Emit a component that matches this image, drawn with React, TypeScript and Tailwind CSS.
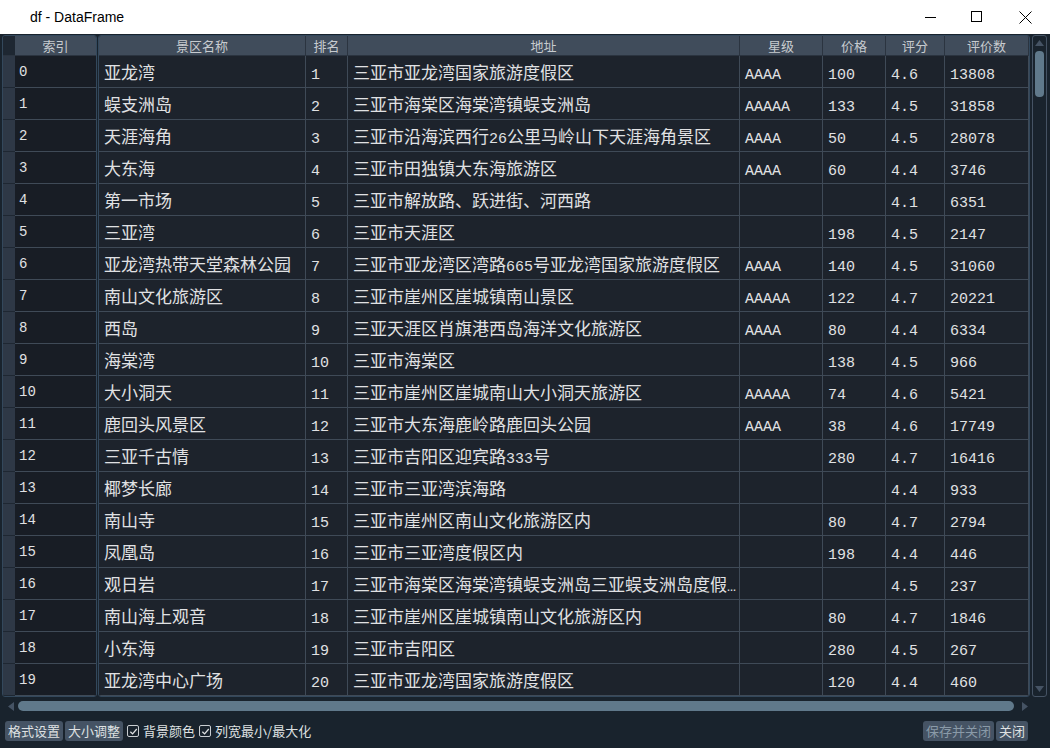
import React from "react";

type Row = [string, string, string, string, string, string, string];

const rows: Row[] = [
  ["亚龙湾", "1", "三亚市亚龙湾国家旅游度假区", "AAAA", "100", "4.6", "13808"],
  ["蜈支洲岛", "2", "三亚市海棠区海棠湾镇蜈支洲岛", "AAAAA", "133", "4.5", "31858"],
  ["天涯海角", "3", "三亚市沿海滨西行26公里马岭山下天涯海角景区", "AAAA", "50", "4.5", "28078"],
  ["大东海", "4", "三亚市田独镇大东海旅游区", "AAAA", "60", "4.4", "3746"],
  ["第一市场", "5", "三亚市解放路、跃进街、河西路", "", "", "4.1", "6351"],
  ["三亚湾", "6", "三亚市天涯区", "", "198", "4.5", "2147"],
  ["亚龙湾热带天堂森林公园", "7", "三亚市亚龙湾区湾路665号亚龙湾国家旅游度假区", "AAAA", "140", "4.5", "31060"],
  ["南山文化旅游区", "8", "三亚市崖州区崖城镇南山景区", "AAAAA", "122", "4.7", "20221"],
  ["西岛", "9", "三亚天涯区肖旗港西岛海洋文化旅游区", "AAAA", "80", "4.4", "6334"],
  ["海棠湾", "10", "三亚市海棠区", "", "138", "4.5", "966"],
  ["大小洞天", "11", "三亚市崖州区崖城南山大小洞天旅游区", "AAAAA", "74", "4.6", "5421"],
  ["鹿回头风景区", "12", "三亚市大东海鹿岭路鹿回头公园", "AAAA", "38", "4.6", "17749"],
  ["三亚千古情", "13", "三亚市吉阳区迎宾路333号", "", "280", "4.7", "16416"],
  ["椰梦长廊", "14", "三亚市三亚湾滨海路", "", "", "4.4", "933"],
  ["南山寺", "15", "三亚市崖州区南山文化旅游区内", "", "80", "4.7", "2794"],
  ["凤凰岛", "16", "三亚市三亚湾度假区内", "", "198", "4.4", "446"],
  ["观日岩", "17", "三亚市海棠区海棠湾镇蜈支洲岛三亚蜈支洲岛度假…", "", "", "4.5", "237"],
  ["南山海上观音", "18", "三亚市崖州区崖城镇南山文化旅游区内", "", "80", "4.7", "1846"],
  ["小东海", "19", "三亚市吉阳区", "", "280", "4.5", "267"],
  ["亚龙湾中心广场", "20", "三亚市亚龙湾国家旅游度假区", "", "120", "4.4", "460"],
];

const columns = [
  { name: "景区名称", w: "w-[207px]" },
  { name: "排名", w: "w-[42px]" },
  { name: "地址", w: "w-[392px]" },
  { name: "星级", w: "w-[83px]" },
  { name: "价格", w: "w-[63px]" },
  { name: "评分", w: "w-[59px]" },
  { name: "评价数", w: "w-[84px]" },
];

// latin runs (and the elision mark) get the smaller mono face, CJK keeps the wider one
function CellText({ value }: { value: string }) {
  const parts = value.split(/([\x20-\x7e…]+)/).filter(Boolean);
  return (
    <>
      {parts.map((p, i) =>
        /^[\x20-\x7e…]+$/.test(p) ? (
          <span key={i} className="font-['Liberation_Mono','DejaVu_Sans_Mono',monospace] text-[15px]">
            {p}
          </span>
        ) : (
          <span key={i}>{p}</span>
        )
      )}
    </>
  );
}

function CheckBox() {
  return (
    <span className="grid h-[12px] w-[12px] place-items-center rounded-[2px] border border-[#c9cdd1] bg-[#19232d]">
      <svg viewBox="0 0 10 10" className="h-[9px] w-[9px]" fill="none" stroke="#dfe1e2" strokeWidth="1.4">
        <path d="M1.5 5.2 L4 7.6 L8.6 2.2" />
      </svg>
    </span>
  );
}

export default function App() {
  return (
    <div className="flex h-[748px] w-[1050px] flex-col overflow-hidden bg-[#19232d] font-['Noto_Sans_CJK_SC',sans-serif] text-[#e0e1e3]">
      {/* title bar */}
      <div className="flex h-[34px] shrink-0 items-center bg-white text-black">
        <span className="pl-[30px] font-['Liberation_Sans',sans-serif] text-[14px]">df - DataFrame</span>
        <div className="ml-auto flex h-full items-center">
          <div className="grid h-full w-[46px] place-items-center">
            <svg width="12" height="12" viewBox="0 0 12 12">
              <path d="M0 6.5 H11" stroke="#000" strokeWidth="1" />
            </svg>
          </div>
          <div className="grid h-full w-[46px] place-items-center">
            <svg width="12" height="12" viewBox="0 0 12 12">
              <rect x="0.5" y="0.5" width="10" height="10" fill="none" stroke="#000" strokeWidth="1" />
            </svg>
          </div>
          <div className="grid h-full w-[50px] place-items-center">
            <svg width="13" height="13" viewBox="0 0 13 13">
              <path d="M0.5 0.5 L12.5 12.5 M12.5 0.5 L0.5 12.5" stroke="#000" strokeWidth="1" />
            </svg>
          </div>
        </div>
      </div>

      <div className="flex flex-1 flex-col px-[2px] pt-[1px]">
        <div className="flex gap-[1px]">
          {/* index table */}
          <div className="flex w-[95px] flex-col overflow-hidden rounded-[3px] border border-[#33485c] bg-[#19232d]">
            <div className="flex h-[20px] border-b border-[#2b3440]">
              <div className="w-[12px] bg-[#1e2732]" />
              <div className="flex flex-1 items-center justify-center bg-[#404c5b] text-[13px] text-[#c7cbcf]">
                索引
              </div>
            </div>
            {rows.map((_, i) => (
              <div key={i} className="flex h-[32px]">
                <div className="w-[12px] border-b border-[#1e2732] bg-[#2e3846]" />
                <div className="flex flex-1 items-center border-b border-[#3f4a57] bg-[#181d25] pl-[4px] pt-[2px] font-['Liberation_Mono',monospace] text-[14px]">
                  {i}
                </div>
              </div>
            ))}
          </div>

          {/* data table */}
          <div className="flex flex-col overflow-hidden rounded-[3px] border border-[#33485c] bg-[#19232d]">
            <div className="flex h-[20px] border-b border-[#2b3440]">
              {columns.map((c) => (
                <div
                  key={c.name}
                  className={`${c.w} flex items-center justify-center border-r border-[#2b3440] bg-[#404c5b] text-[13px] text-[#c7cbcf]`}
                >
                  {c.name}
                </div>
              ))}
            </div>
            {rows.map((r, i) => (
              <div key={i} className="flex h-[32px]">
                {r.map((v, j) => (
                  <div
                    key={j}
                    className={`${columns[j].w} overflow-hidden whitespace-nowrap border-r border-b border-[#3f4a57] bg-[#1d232c] pl-[5px] text-[17px] leading-[31px]`}
                  >
                    <CellText value={v} />
                  </div>
                ))}
              </div>
            ))}
          </div>

          {/* vertical scrollbar */}
          <div className="ml-[1px] flex w-[15px] flex-col items-center rounded-[3px] border border-[#455364] bg-[#19232d] py-[2px]">
            <svg width="9" height="6" viewBox="0 0 9 6" className="mt-[2px]">
              <path d="M0 6 L4.5 0 L9 6 Z" fill="#455364" />
            </svg>
            <div className="mt-[5px] h-[46px] w-[9px] rounded-[4px] bg-[#60798b]" />
            <div className="flex-1" />
            <svg width="9" height="6" viewBox="0 0 9 6" className="mb-[2px]">
              <path d="M0 0 L4.5 6 L9 0 Z" fill="#455364" />
            </svg>
          </div>
        </div>

        {/* horizontal scrollbar */}
        <div className="mt-[3px] flex h-[12px] items-center pl-[6px] pr-[20px]">
          <svg width="6" height="9" viewBox="0 0 6 9">
            <path d="M6 0 L0 4.5 L6 9 Z" fill="#455364" />
          </svg>
          <div className="ml-[4px] h-[10px] flex-1 rounded-[5px] bg-[#60798b]" />
          <svg width="6" height="9" viewBox="0 0 6 9" className="ml-[8px]">
            <path d="M0 0 L6 4.5 L0 9 Z" fill="#455364" />
          </svg>
        </div>

        {/* bottom bar */}
        <div className="mt-[8px] flex h-[22px] items-center text-[13px]">
          <div className="ml-[3px] flex items-center gap-[2px]">
            <button className="rounded-[3px] bg-[#455364] px-[3px] leading-[20px] text-[#dfe1e2]">格式设置</button>
            <button className="rounded-[3px] bg-[#455364] px-[3px] leading-[20px] text-[#dfe1e2]">大小调整</button>
          </div>
          <div className="ml-[4px] flex items-center gap-[4px]">
            <CheckBox />
            <span className="text-[#dfe1e2]">背景颜色</span>
          </div>
          <div className="ml-[4px] flex items-center gap-[4px]">
            <CheckBox />
            <span className="text-[#dfe1e2]">列宽最小/最大化</span>
          </div>
          <div className="ml-auto mr-[20px] flex items-center gap-[2px]">
            <button className="rounded-[3px] bg-[#455364] px-[3px] leading-[20px] text-[#8a9aa8]">保存并关闭</button>
            <button className="rounded-[3px] bg-[#455364] px-[3px] leading-[20px] text-[#dfe1e2]">关闭</button>
          </div>
        </div>
      </div>
    </div>
  );
}
